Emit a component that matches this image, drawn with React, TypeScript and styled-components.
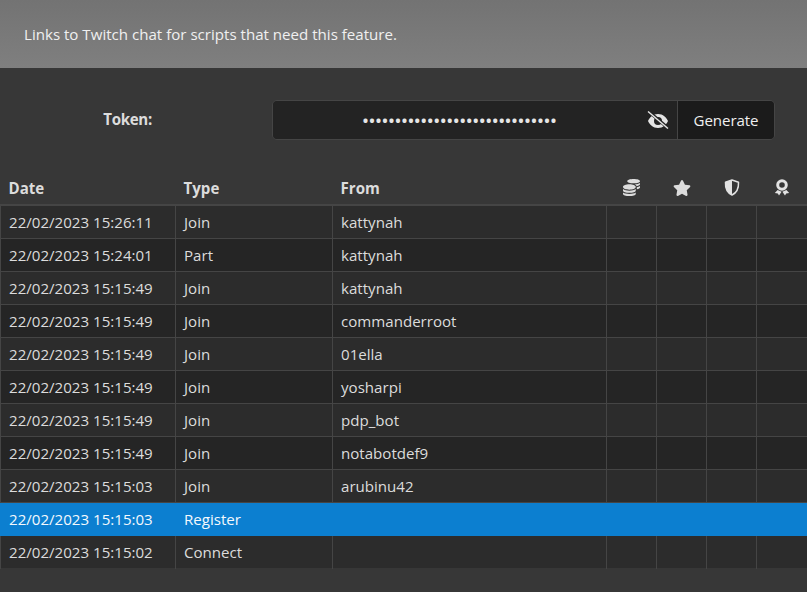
import React from 'react'
import styled, { createGlobalStyle } from 'styled-components'
import { FaCoins, FaStar } from 'react-icons/fa'

const GlobalStyle = createGlobalStyle`
  html, body { margin: 0; padding: 0; height: 100%; background: #373737; overflow: hidden; }
  body { font-family: "Open Sans", "Noto Sans", sans-serif; font-size: 15.1px; color: #dcdcdc; }
`

const Page = styled.div`
  width: 807px;
  height: 592px;
  background: #373737;
  display: flex;
  flex-direction: column;
`

const Banner = styled.div`
  height: 68px;
  box-sizing: border-box;
  padding: 0 24px;
  display: flex;
  align-items: center;
  background: linear-gradient(#737373, #7f7f7f);
  color: #f0f0f0;
`

const TokenRow = styled.div`
  height: 105px;
  box-sizing: border-box;
  padding: 32px 32px 0 0;
  display: flex;
  align-items: flex-start;
`

const TokenLabel = styled.label`
  width: 272px;
  height: 40px;
  flex: none;
  padding: 0 120px 3px 0;
  box-sizing: border-box;
  display: flex;
  align-items: center;
  justify-content: flex-end;
  font-weight: 700;
  letter-spacing: -0.3px;
  color: #dcdcdc;
`

const InputGroup = styled.div`
  flex: 1;
  height: 40px;
  display: flex;
  border: 1px solid #454545;
  border-radius: 5px;
  box-sizing: border-box;
  overflow: hidden;
`

const TokenField = styled.div`
  flex: 1;
  background: #232323;
  display: flex;
  align-items: center;
  justify-content: center;
  position: relative;
  padding-right: 30px;
  color: #e6e6e6;
`

const Dots = styled.span`
  font-size: 14.5px;
  font-weight: 700;
  letter-spacing: 1.03px;
`

const EyeIcon = styled.svg`
  position: absolute;
  right: 8px;
  top: 10px;
  display: block;
`

const GenerateButton = styled.button`
  width: 97px;
  border: 0;
  border-left: 1px solid #454545;
  background: #1b1b1b;
  color: #f0f0f0;
  font: inherit;
  letter-spacing: -0.1px;
  padding: 0;
`

const LogTable = styled.table`
  width: 807px;
  table-layout: fixed;
  border-collapse: collapse;
`

const HeadCell = styled.th<{ $center?: boolean }>`
  height: 32px;
  padding: 0 8px 2px;
  box-sizing: border-box;
  text-align: ${(p) => (p.$center ? 'center' : 'left')};
  font-weight: 700;
  color: #dcdcdc;
  border-bottom: 2px solid #454545;
  vertical-align: middle;
  svg { display: block; margin: 0 auto; }
`

const Row = styled.tr<{ $selected?: boolean; $odd?: boolean; $last?: boolean }>`
  height: 33px;
  background: ${(p) => (p.$selected ? '#0c7fd0' : p.$odd ? '#252525' : '#2c2c2c')};
  color: ${(p) => (p.$selected ? '#f4f9fd' : '#dcdcdc')};
  td {
    border: ${(p) => (p.$selected ? '1px solid #0c7fd0' : '1px solid #454545')};
    ${(p) => (p.$last ? 'border-bottom-color: transparent;' : '')}
  }
`

const Cell = styled.td`
  padding: 0 8px;
  box-sizing: border-box;
  white-space: nowrap;
`

const ShieldIcon = () => (
  <svg width="16" height="17" viewBox="0 0 16 17">
    <path d="M8 1 L14.5 3.2 C14.8 8.5 13 13.5 8 16 C3 13.5 1.2 8.5 1.5 3.2 Z" fill="none" stroke="#e2e2e2" strokeWidth="1.5" strokeLinejoin="round" />
    <path d="M8 1 L1.5 3.2 C1.2 8.5 3 13.5 8 16 Z" fill="#e2e2e2" />
  </svg>
)

const RibbonIcon = () => (
  <svg width="16" height="17" viewBox="0 0 16 17">
    <circle cx="8" cy="6" r="4.3" fill="none" stroke="#e2e2e2" strokeWidth="3" />
    <path d="M3.6 11 L0.8 14 L3.8 14.4 L5 16.4 L7.6 12.8 Z M12.4 11 L15.2 14 L12.2 14.4 L11 16.4 L8.4 12.8 Z" fill="#e2e2e2" />
  </svg>
)

const rows = [
  ['22/02/2023 15:26:11', 'Join', 'kattynah'],
  ['22/02/2023 15:24:01', 'Part', 'kattynah'],
  ['22/02/2023 15:15:49', 'Join', 'kattynah'],
  ['22/02/2023 15:15:49', 'Join', 'commanderroot'],
  ['22/02/2023 15:15:49', 'Join', '01ella'],
  ['22/02/2023 15:15:49', 'Join', 'yosharpi'],
  ['22/02/2023 15:15:49', 'Join', 'pdp_bot'],
  ['22/02/2023 15:15:49', 'Join', 'notabotdef9'],
  ['22/02/2023 15:15:03', 'Join', 'arubinu42'],
  ['22/02/2023 15:15:03', 'Register', ''],
  ['22/02/2023 15:15:02', 'Connect', ''],
]

export default function App() {
  return (
    <Page>
      <GlobalStyle />
      <Banner>Links to Twitch chat for scripts that need this feature.</Banner>
      <TokenRow>
        <TokenLabel>Token:</TokenLabel>
        <InputGroup>
          <TokenField>
            <Dots>••••••••••••••••••••••••••••••</Dots>
            <EyeIcon width="22" height="18" viewBox="0 0 22 18">
              <path fillRule="evenodd" d="M11 3 C16 3 19.5 6.5 21 10 C19.5 13.5 16 17 11 17 C6 17 2.5 13.5 1 10 C2.5 6.5 6 3 11 3 Z M11 6 A4 4 0 1 0 11 14 A4 4 0 1 0 11 6 Z" fill="#e4e4e4" />
              <path d="M2 0.8 L21 17" stroke="#232323" strokeWidth="3.2" />
              <path d="M1 0.5 L21 17.5" stroke="#e4e4e4" strokeWidth="1.4" />
            </EyeIcon>
          </TokenField>
          <GenerateButton>Generate</GenerateButton>
        </InputGroup>
      </TokenRow>
      <LogTable>
        <colgroup>
          <col style={{ width: 175 }} />
          <col style={{ width: 157 }} />
          <col style={{ width: 274 }} />
          <col style={{ width: 50 }} />
          <col style={{ width: 50 }} />
          <col style={{ width: 50 }} />
          <col style={{ width: 51 }} />
        </colgroup>
        <thead>
          <tr>
            <HeadCell>Date</HeadCell>
            <HeadCell>Type</HeadCell>
            <HeadCell>From</HeadCell>
            <HeadCell $center><FaCoins size={17} /></HeadCell>
            <HeadCell $center><FaStar size={18} /></HeadCell>
            <HeadCell $center><ShieldIcon /></HeadCell>
            <HeadCell $center><RibbonIcon /></HeadCell>
          </tr>
        </thead>
        <tbody>
          {rows.map((r, i) => (
            <Row key={i} $odd={i % 2 === 1} $selected={r[1] === 'Register'} $last={i === rows.length - 1}>
              <Cell>{r[0]}</Cell>
              <Cell>{r[1]}</Cell>
              <Cell>{r[2]}</Cell>
              <Cell />
              <Cell />
              <Cell />
              <Cell />
            </Row>
          ))}
        </tbody>
      </LogTable>
    </Page>
  )
}
